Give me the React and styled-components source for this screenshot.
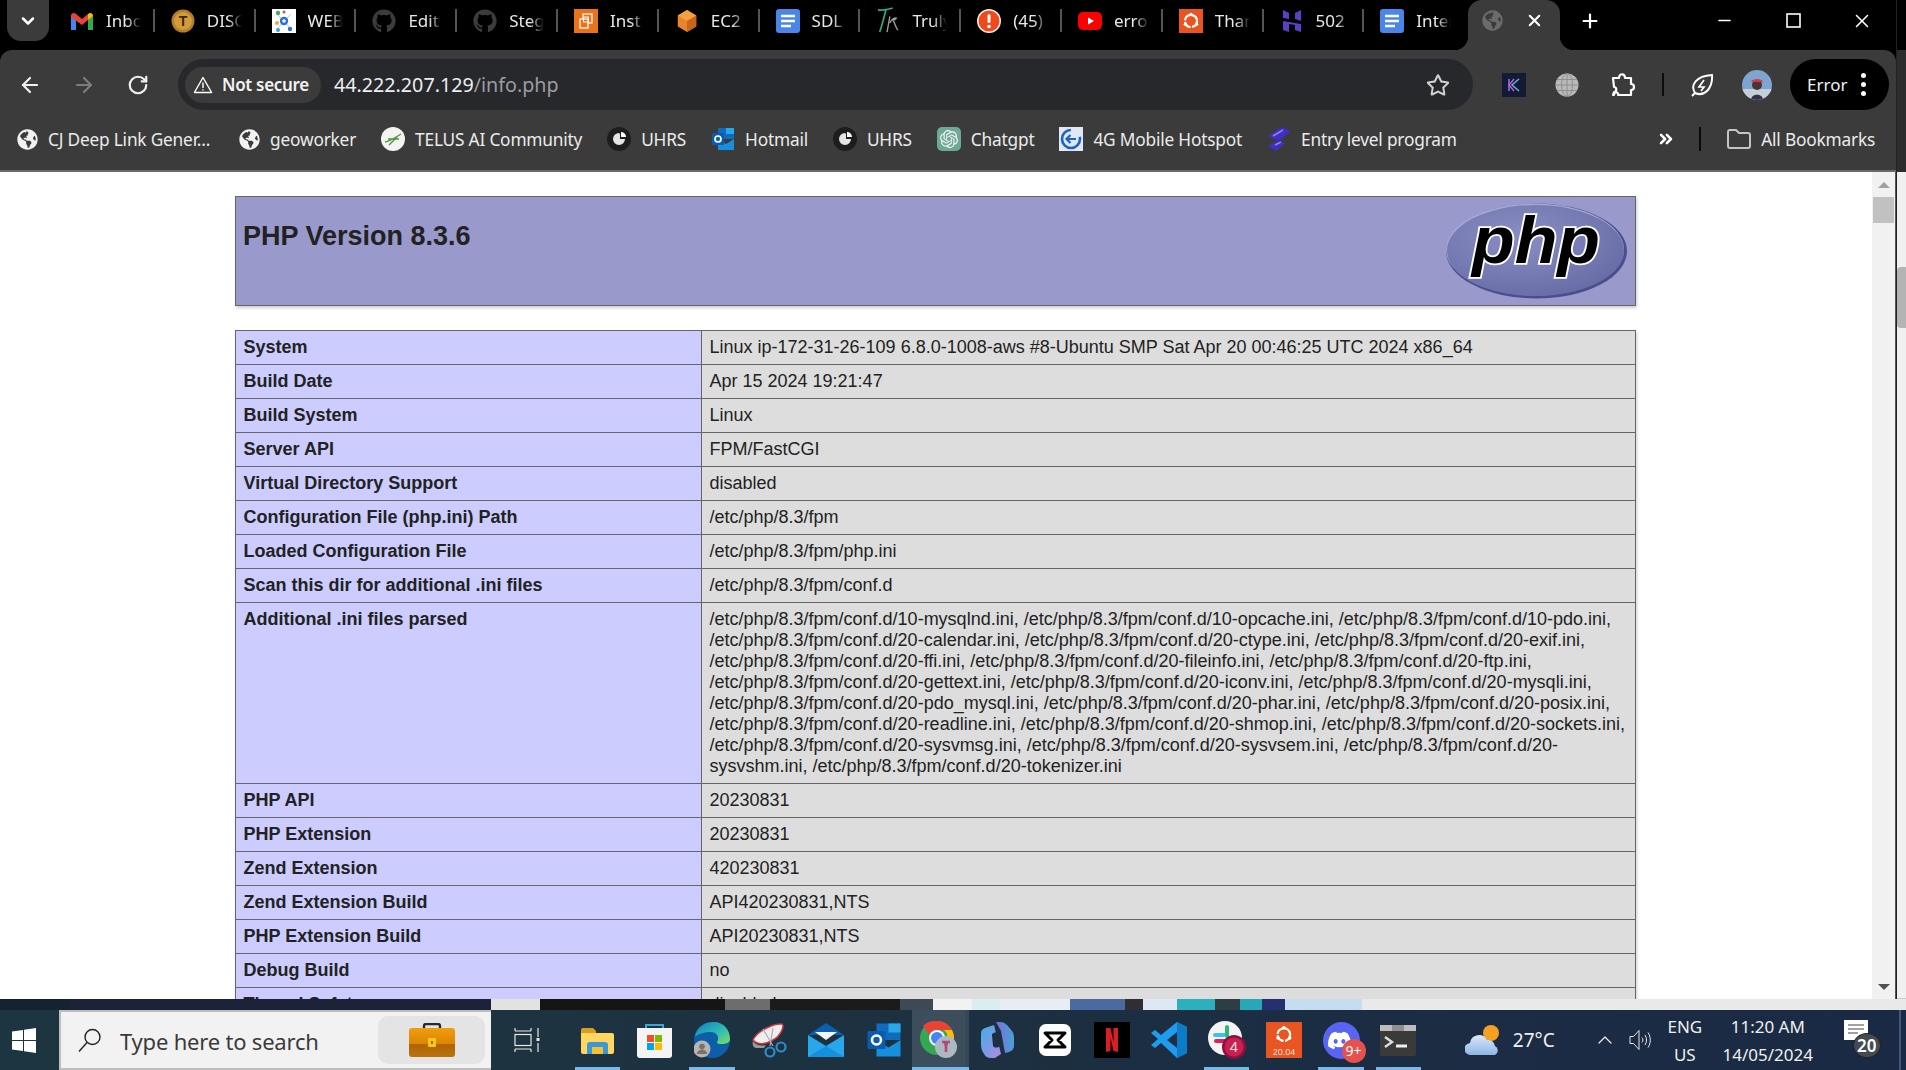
import React from "react";
import styled, { createGlobalStyle } from "styled-components";
import {
  FaGithub,
  FaGlobeAmericas,
  FaDiscord,
  FaRegStar,
} from "react-icons/fa";
import { SiOpenai } from "react-icons/si";
import { LuChevronDown, LuChevronsRight, LuX, LuPlus, LuMinus, LuArrowLeft, LuArrowRight, LuRotateCw, LuChevronUp } from "react-icons/lu";

const UI_FONT = `"Noto Sans", "Open Sans", sans-serif`;

const GlobalStyle = createGlobalStyle`
  html, body { margin: 0; padding: 0; background: #000; overflow: hidden; }
  * { box-sizing: border-box; }
`;

/* ---------- favicons ---------- */

const Gmail = () => (
  <svg width="24" height="24" viewBox="0 0 24 24">
    <path d="M1 6v15h5V11z" fill="#4285f4" />
    <path d="M18 11v10h5V6z" fill="#34a853" />
    <path d="M1 7c0-3 3-4 5-2l6 5 6-5v6l-6 5-11-8z" fill="#ea4335" />
    <path d="M18 5c2-2 5-1 5 2l-5 4z" fill="#fbbc04" />
  </svg>
);
const CircleT = () => (
  <svg width="24" height="24" viewBox="0 0 24 24">
    <circle cx="12" cy="12" r="11.5" fill="#b37f2c" />
    <circle cx="12" cy="12" r="9" fill="#d49a3c" />
    <text x="12" y="17" fontSize="14" fontWeight="700" textAnchor="middle" fontFamily="Liberation Sans" fill="#3a2a10">T</text>
  </svg>
);
const WebNodes = () => (
  <svg width="24" height="24" viewBox="0 0 24 24">
    <rect width="24" height="24" fill="#fff" />
    <path d="M5 5l7 7 7-7M5 20l7-8 7 8" stroke="#b9c6d8" fill="none" />
    <circle cx="12" cy="12" r="4.2" fill="#2a6fdc" />
    <circle cx="12" cy="12" r="1.8" fill="#fff" />
    <circle cx="6" cy="4" r="2.2" fill="#3fae5a" />
    <circle cx="12" cy="3" r="1.5" fill="#e34a4a" />
    <circle cx="5" cy="14" r="2" fill="#f0a531" />
    <circle cx="6" cy="21" r="2" fill="#2ea3d8" />
    <circle cx="18" cy="20" r="2.2" fill="#2a6fdc" />
  </svg>
);
const AwsCopy = () => (
  <svg width="24" height="24" viewBox="0 0 24 24">
    <rect width="24" height="24" fill="#e8731a" />
    <rect x="9" y="5" width="9" height="9" fill="none" stroke="#fff" strokeWidth="1.2" />
    <rect x="6" y="10" width="8" height="9" fill="#e8731a" stroke="#fff" strokeWidth="1.2" />
    <rect x="9.5" y="8" width="5" height="5" fill="none" stroke="#fff" />
  </svg>
);
const Cube = () => (
  <svg width="24" height="24" viewBox="0 0 24 26">
    <path d="M12 1l10 6v12l-10 6-10-6V7z" fill="#e8842a" />
    <path d="M12 1l10 6-10 6-10-6z" fill="#f4a040" />
    <path d="M12 13l10-6v12l-10 6z" fill="#c9651a" />
  </svg>
);
const Doc = () => (
  <svg width="24" height="24" viewBox="0 0 24 24">
    <rect width="24" height="24" rx="3" fill="#4a86e8" />
    <path d="M5 7h14M5 12h14M5 17h10" stroke="#fff" strokeWidth="2.4" />
  </svg>
);
const TrScript = () => (
  <svg width="24" height="28" viewBox="0 0 26 30">
    <path d="M2 3c6 1 12-1 16-2M11 2C9 10 7 18 4 27" stroke="#2fa98f" strokeWidth="1.8" fill="none" />
    <path d="M15 10c-1 6-2 11-3 17M15 17c2-4 5-6 7-5-1 2-3 2-4 2 3 3 3 9 6 11" stroke="#9a9a9a" strokeWidth="1.5" fill="none" />
  </svg>
);
const Alert = () => (
  <svg width="24" height="24" viewBox="0 0 24 24">
    <circle cx="12" cy="12" r="12" fill="#f5f0ea" />
    <circle cx="12" cy="12" r="10.5" fill="#ee4a1c" />
    <rect x="10.5" y="5" width="3" height="9" rx="1.5" fill="#fff" />
    <circle cx="12" cy="17.5" r="1.8" fill="#fff" />
  </svg>
);
const YouTube = () => (
  <svg width="24" height="18" viewBox="0 0 24 18">
    <rect width="24" height="18" rx="5" fill="#f00" />
    <path d="M10 5.5l6 3.5-6 3.5z" fill="#fff" />
  </svg>
);
const Ubuntu = ({ label }) => (
  <svg width={label ? 36 : 24} height={label ? 36 : 24} viewBox="0 0 24 24">
    <rect width="24" height="24" fill="#e95420" />
    <g transform={label ? "translate(3.5 0) scale(.7)" : ""}>
      <circle cx="12" cy="12" r="6" fill="none" stroke="#fff" strokeWidth="2.2" strokeDasharray="8 1.5" />
      <circle cx="12" cy="5.5" r="1.7" fill="#fff" />
      <circle cx="6.4" cy="15.2" r="1.7" fill="#fff" />
      <circle cx="17.6" cy="15.2" r="1.7" fill="#fff" />
    </g>
    {label && <text x="12" y="22.3" fontSize="6" fontFamily="Liberation Sans" textAnchor="middle" fill="#fff" opacity=".85">{label}</text>}
  </svg>
);
const Hostinger = () => (
  <svg width="24" height="24" viewBox="0 0 24 24">
    <path d="M3 1l6 3v6l-6-1zM21 1v11l-6-2V4zM3 12l18 3v8l-6-2v-5L9 15v8l-6-2z" fill="#5b3fc4" />
  </svg>
);
const TelusLeaf = () => (
  <svg width="24" height="24" viewBox="0 0 24 24">
    <circle cx="12" cy="12" r="12" fill="#f3f3f3" />
    <path d="M4 15c5-1 10-4 16-8M8 18l8-8M7 12h11" stroke="#4a9a3a" strokeWidth="1.4" fill="none" />
  </svg>
);
const Uhrs = () => (
  <svg width="24" height="24" viewBox="0 0 24 24">
    <circle cx="12" cy="12" r="12" fill="#1d1d1d" />
    <path d="M12 6a6 6 0 1 0 6 6h-5V7z" fill="#e4e4e4" />
    <path d="M14 5a5 5 0 0 1 5 5h-5z" fill="#fff" />
  </svg>
);
const Outlook = ({ size = 24 }) => (
  <svg width={size} height={size} viewBox="0 0 24 24">
    <rect x="7" y="1" width="16" height="11" fill="#0f6cbd" />
    <rect x="15" y="1" width="8" height="6" fill="#28a8ea" />
    <path d="M7 12l8 5 8-5v11H7z" fill="#1490df" />
    <rect x="1" y="6" width="12" height="12" rx="1" fill="#0a5cb0" />
    <circle cx="7" cy="12" r="3" fill="none" stroke="#fff" strokeWidth="1.7" />
  </svg>
);
const Chatgpt = () => (
  <ChatBadge><SiOpenai size={18} color="#f4f4f4" /></ChatBadge>
);
const FourG = () => (
  <svg width="24" height="24" viewBox="0 0 24 24">
    <rect width="24" height="24" fill="#dfe8f4" />
    <circle cx="12" cy="12" r="9" fill="none" stroke="#1c62c4" strokeWidth="2.6" strokeDasharray="42 12" />
    <path d="M9 12h8M11.500 8l-4 4 4 4" stroke="#1c62c4" strokeWidth="2.2" fill="none" />
  </svg>
);
const EntryLogo = () => (
  <svg width="24" height="24" viewBox="0 0 24 24">
    <path d="M15 0l8 4-8 8-3 2-11-5zM10 14l8 2-9 8-8-5z" fill="#3f2fc4" />
    <path d="M6 9l10-6M8 18l6-3" stroke="#8c82ea" strokeWidth="1.6" />
  </svg>
);
const KExt = () => (
  <svg width="24" height="24" viewBox="0 0 24 24">
    <rect width="24" height="24" fill="#141a33" />
    <path d="M7 6v12" stroke="#8d6ff0" strokeWidth="1.6" />
    <path d="M17 6l-7 6 7 6" stroke="#5fb0e8" strokeWidth="1.6" fill="none" />
    <path d="M12 6l-5 6 5 6" stroke="#d05fd8" strokeWidth="1.3" fill="none" />
  </svg>
);
const GridGlobe = () => (
  <svg width="24" height="24" viewBox="0 0 24 24">
    <circle cx="12" cy="12" r="11.5" fill="#b9b9b9" />
    <g stroke="#8a8a8a" fill="none" strokeWidth=".9">
      <ellipse cx="12" cy="12" rx="5.5" ry="11.5" />
      <path d="M12 .5v23M.5 12h23M2 6.5h20M2 17.5h20" />
    </g>
  </svg>
);
const PuzzleOut = () => (
  <svg width="25" height="25" viewBox="0 0 25 25" fill="none" stroke="#fff" strokeWidth="2.2" strokeLinejoin="round">
    <path d="M2 6h6c0-5 6-5 6 0h6v6c4 0 4 6 0 6v5H7c1-3-4-4-4 0H2l1-3c3 0 3-5 0-5z" />
  </svg>
);
const LeafBolt = () => (
  <svg width="24" height="24" viewBox="0 0 24 24" fill="none" stroke="#fff" strokeWidth="2">
    <path d="M2 23l3-3M5 20C0 12 6 3 22 2c1 14-8 22-17 18z" />
    <path d="M14 7l-5 7h5l-3 4" strokeWidth="1.7" />
  </svg>
);
const Avatar = ({ size = 30 }) => (
  <svg width={size} height={size} viewBox="0 0 30 30">
    <defs>
      <clipPath id={`av${size}`}><circle cx="15" cy="15" r="15" /></clipPath>
    </defs>
    <g clipPath={`url(#av${size})`}>
      <rect width="30" height="30" fill="#7ea4cf" />
      <rect y="19" width="30" height="11" fill="#c5cfd8" />
      <circle cx="15" cy="15" r="5" fill="#4a3232" />
      <path d="M9 12c1-4 11-4 12 0z" fill="#d03a4a" />
      <path d="M9 30c0-7 12-7 12 0z" fill="#334" />
    </g>
  </svg>
);
const OutlineFolder = () => (
  <svg width="24" height="20" viewBox="0 0 24 20" fill="none" stroke="#c4c4c4" strokeWidth="2">
    <path d="M1 3a2 2 0 0 1 2-2h6l3 3h9a2 2 0 0 1 2 2v11a2 2 0 0 1-2 2H3a2 2 0 0 1-2-2z" />
  </svg>
);
const WarnTriangle = () => (
  <svg width="20" height="18" viewBox="0 0 20 18" fill="none" stroke="#fff" strokeWidth="1.4">
    <path d="M10 1.5l8.6 15H1.4z" strokeLinejoin="round" />
    <path d="M10 6.5v5.5M10 13.2v1.4" />
  </svg>
);
const MaxSquare = () => (
  <svg width="15" height="15" viewBox="0 0 15 15"><rect x="1" y="1" width="13" height="13" fill="none" stroke="#fff" strokeWidth="1.6" /></svg>
);

/* ---------- taskbar icons ---------- */

const WinLogo = () => (
  <svg width="24" height="25" viewBox="0 0 24 25" fill="#fff">
    <path d="M0 3.5l11-1.5v10H0zM12 1.8L24 0v12H12zM0 13h11v10L0 21.5zM12 13h12v12l-12-1.8z" />
  </svg>
);
const SearchGlass = () => (
  <svg width="24" height="24" viewBox="0 0 24 24" fill="none" stroke="#222" strokeWidth="1.4">
    <circle cx="14.5" cy="9" r="7.5" />
    <path d="M9 14.5L1 23.5" />
  </svg>
);
const Briefcase = () => (
  <svg width="46" height="34" viewBox="0 0 46 34">
    <defs>
      <linearGradient id="bc" x1="0" y1="0" x2="0" y2="1">
        <stop offset="0" stopColor="#f09c10" /><stop offset=".55" stopColor="#dd8500" />
        <stop offset=".56" stopColor="#b06300" /><stop offset="1" stopColor="#b87410" />
      </linearGradient>
    </defs>
    <path d="M15 6V3a2 2 0 0 1 2-2h12a2 2 0 0 1 2 2v3" stroke="#2a2a2a" strokeWidth="2.4" fill="none" />
    <rect y="5" width="46" height="29" rx="3" fill="url(#bc)" />
    <rect x="19" y="15" width="8" height="9" rx="1" fill="#f7c61d" />
    <rect x="22" y="18" width="2" height="3" fill="#a86a00" />
  </svg>
);
const TaskViewIcon = () => (
  <svg width="32" height="24" viewBox="0 0 32 24" fill="none" stroke="#e8e8e8" strokeWidth="1.2">
    <path d="M1 3h16M1 0v3M17 0v3M1 21h16M1 21v3M17 21v3" />
    <rect x="1" y="6.5" width="16" height="11" />
    <path d="M24 0v9M24 15v9" />
    <rect x="22.5" y="10" width="3" height="3" fill="#e8e8e8" stroke="none" />
  </svg>
);
const ExplorerIcon = () => (
  <svg width="33" height="27" viewBox="0 0 33 27">
    <path d="M0 3a2 2 0 0 1 2-2h10l3 3v6H0z" fill="#d89e20" />
    <path d="M0 6h31a2 2 0 0 1 2 2v17a2 2 0 0 1-2 2H2a2 2 0 0 1-2-2z" fill="#ffd75e" />
    <path d="M6 27v-9a3 3 0 0 1 3-3h15a3 3 0 0 1 3 3v9h-5v-7H11v7z" fill="#3a98d8" />
    <rect x="11" y="20" width="11" height="7" fill="#f2c232" />
  </svg>
);
const StoreIcon = () => (
  <svg width="35" height="35" viewBox="0 0 35 35">
    <path d="M9 6V2h17v4" fill="none" stroke="#3aa6dc" strokeWidth="2" />
    <path d="M0 5h35v27a3 3 0 0 1-3 3H3a3 3 0 0 1-3-3z" fill="#f4f4f4" />
    <rect x="10" y="12" width="7" height="7" fill="#f25022" />
    <rect x="18" y="12" width="7" height="7" fill="#7fba00" />
    <rect x="10" y="20" width="7" height="7" fill="#00a4ef" />
    <rect x="18" y="20" width="7" height="7" fill="#ffb900" />
  </svg>
);
const EdgeIcon = () => (
  <svg width="36" height="36" viewBox="0 0 36 36">
    <defs>
      <linearGradient id="edg" x1="0" y1="0" x2="1" y2="1">
        <stop offset="0" stopColor="#0c7fc4" /><stop offset=".6" stopColor="#33c0b0" /><stop offset="1" stopColor="#7fdc5a" />
      </linearGradient>
    </defs>
    <circle cx="18" cy="18" r="18" fill="#0c5ea8" />
    <path d="M1 15C3 3 14 0 20 0c10 0 16 8 16 17 0 4-4 5-9 5-4 0-5-1-3-4 1-4-2-8-7-8-6 0-14 2-16 5z" fill="url(#edg)" />
    <circle cx="8" cy="27" r="8.5" fill="#b5b5b5" />
    <circle cx="8" cy="24.5" r="2.8" fill="#7c7068" />
    <path d="M2.8 32c.6-6 9.800-6 10.400 0z" fill="#7c7068" />
  </svg>
);
const SnipIcon = () => (
  <svg width="35" height="35" viewBox="0 0 35 35" fill="none">
    <path d="M1 17C5 8 22 0 30 1c3 1-1 12-9 16-8 5-16 5-20 0z" fill="#eee" stroke="#c8363c" strokeWidth="1.5" />
    <path d="M1 18c3 5 10 5 13 4l-2 3H4c-3 0-4-4-3-7z" fill="#9a9a9a" />
    <path d="M11 6l10 17M21 5l-3 18" stroke="#aab" strokeWidth="1.2" />
    <circle cx="18" cy="29" r="4.5" stroke="#2f8ac6" strokeWidth="2.2" />
    <circle cx="29" cy="24" r="4.5" stroke="#2f8ac6" strokeWidth="2.2" />
  </svg>
);
const MailIcon = () => (
  <svg width="36" height="34" viewBox="0 0 36 34">
    <path d="M18 0l18 12H0z" fill="#0b5fb0" />
    <path d="M7 9h22l-11 8z" fill="#f4f4f4" />
    <path d="M0 12l18 11 18-11v22H0z" fill="#28a8ea" />
    <path d="M0 34l18-11 18 11z" fill="#1490df" />
  </svg>
);
const ChromeIcon = () => (
  <svg width="38" height="38" viewBox="0 0 38 38">
    <circle cx="17" cy="17" r="17" fill="#34a853" />
    <path d="M17 0a17 17 0 0 1 15 9H17a8 8 0 0 0-7.500 5L3 5a17 17 0 0 1 14-5z" fill="#ea4335" />
    <path d="M32 9a17 17 0 0 1-13 25l6-13a8 8 0 0 0-1-12z" fill="#fbbc04" />
    <circle cx="17" cy="17" r="8" fill="#fff" />
    <circle cx="17" cy="17" r="6" fill="#4285f4" />
    <circle cx="26" cy="26" r="11" fill="#aeb7c4" />
    <path d="M22 21h8M26 21v10" stroke="#b04a78" strokeWidth="2.6" />
    <circle cx="26" cy="23" r="2" fill="#b04a78" />
  </svg>
);
const CopilotIcon = () => (
  <svg width="33" height="36" viewBox="0 0 33 36">
    <defs>
      <linearGradient id="cop1" x1="0" y1="0" x2="1" y2="0"><stop offset="0" stopColor="#7a6fd8" /><stop offset="1" stopColor="#4aa0d8" /></linearGradient>
      <linearGradient id="cop2" x1="0" y1="0" x2="1" y2="1"><stop offset="0" stopColor="#3fb0e8" /><stop offset="1" stopColor="#b08ae0" /></linearGradient>
    </defs>
    <path d="M15 0h4c3 0 5 1 7 3l5 6c2 3 2 5 2 9v6c0 3-2 5-5 6l-4 1-4-22z" fill="url(#cop1)" />
    <path d="M0 12c0-3 1-5 4-6l9-3 7 29-6 4H10c-3 0-5-1-7-4-2-3-3-6-3-10z" fill="url(#cop2)" />
    <path d="M11 13c0-2 3-3 5-2l3 13c-2 2-6 2-7 0z" fill="#1d2f42" />
  </svg>
);
const CapCutIcon = () => (
  <svg width="32" height="32" viewBox="0 0 32 32">
    <rect width="32" height="32" rx="7" fill="#fff" />
    <path d="M6 9h20l-7 7 7 7H6l7-7z" fill="none" stroke="#000" strokeWidth="3" strokeLinejoin="round" />
  </svg>
);
const NetflixIcon = () => (
  <svg width="36" height="36" viewBox="0 0 36 36">
    <rect width="36" height="36" fill="#000" />
    <path d="M12 6h4.500l3 14V6H24v24l-4.500-1-3-13v13L12 30z" fill="#d81f26" />
  </svg>
);
const VsCodeIcon = () => (
  <svg width="36" height="36" viewBox="0 0 36 36">
    <path d="M26 0l10 5v26l-10 5-16-15-6 5-4-3 7-6-7-6 4-3 6 5z" fill="#1f9cf0" />
    <path d="M26 0l10 5v26l-10 5z" fill="#0a7cc8" />
    <path d="M26 10l-10 8 10 8z" fill="#1d2f42" />
  </svg>
);
const SlackIcon = () => (
  <svg width="38" height="38" viewBox="0 0 38 38">
    <circle cx="17" cy="17" r="17" fill="#f4f4f4" />
    <path d="M7 14h9" stroke="#36c5f0" strokeWidth="4" strokeLinecap="round" />
    <path d="M19 6v9" stroke="#2eb67d" strokeWidth="4" strokeLinecap="round" />
    <path d="M8 20h9" stroke="#e01e5a" strokeWidth="4" strokeLinecap="round" />
    <path d="M21 20h6" stroke="#ecb22e" strokeWidth="4" strokeLinecap="round" />
    <circle cx="26" cy="26" r="12" fill="#8c1045" />
    <circle cx="26" cy="26" r="9.500" fill="#c8214f" />
    <text x="26" y="31" fontSize="15" fontFamily="Liberation Sans" textAnchor="middle" fill="#f6d9df">4</text>
  </svg>
);
const DiscordIcon = () => (
  <DiscordWrap>
    <FaDiscord size={25} color="#fff" />
    <DiscordBadge>9+</DiscordBadge>
  </DiscordWrap>
);
const TerminalIcon = () => (
  <svg width="36" height="31" viewBox="0 0 36 31">
    <rect width="36" height="31" rx="2" fill="#3a3a3a" />
    <rect width="36" height="6" fill="#bdbdbd" />
    <rect x="12" width="12" height="6" fill="#8f8f8f" />
    <path d="M5 12l7 5-7 5" stroke="#ddd" strokeWidth="2.4" fill="none" />
    <path d="M16 21h11" stroke="#eee" strokeWidth="3" />
  </svg>
);
const CloudSun = () => (
  <svg width="36" height="30" viewBox="0 0 36 30">
    <defs>
      <linearGradient id="cl" x1="0" y1="0" x2="0" y2="1"><stop offset="0" stopColor="#dbe8f8" /><stop offset="1" stopColor="#8db6e6" /></linearGradient>
    </defs>
    <circle cx="26" cy="8" r="8" fill="#f5a020" />
    <path d="M6 30a6 6 0 0 1-1-12 9 9 0 0 1 17-3 7 7 0 0 1 8 6 5 5 0 0 1 0 9z" fill="url(#cl)" />
  </svg>
);
const Speaker = () => (
  <svg width="23" height="22" viewBox="0 0 23 22" fill="none" stroke="#e6e6e6" strokeWidth="1">
    <path d="M1 7.500h3.500L10 1.500v19L4.500 14.500H1z" />
    <path d="M13 8.500c1.200 1.500 1.200 3.500 0 5M16 6c2 3 2 7 0 10M19 3.500c3 4 3 11 0 15" />
  </svg>
);
const Notif = () => (
  <NotifWrap>
    <svg width="24" height="20" viewBox="0 0 24 20">
      <rect width="24" height="20" fill="#fff" />
      <path d="M4 5h16M4 9h16M4 13h10" stroke="#444" strokeWidth="1.2" />
    </svg>
    <NotifBadge>20</NotifBadge>
  </NotifWrap>
);

/* ---------- data ---------- */

const tabs = [
  { icon: <Gmail />, title: "Inbox" },
  { icon: <CircleT />, title: "DISC" },
  { icon: <WebNodes />, title: "WEB" },
  { icon: <FaGithub size={24} color="#3c3c3c" />, title: "Edit" },
  { icon: <FaGithub size={24} color="#3c3c3c" />, title: "Steg" },
  { icon: <AwsCopy />, title: "Inst" },
  { icon: <Cube />, title: "EC2" },
  { icon: <Doc />, title: "SDL" },
  { icon: <TrScript />, title: "Truly" },
  { icon: <Alert />, title: "(45)" },
  { icon: <YouTube />, title: "error" },
  { icon: <Ubuntu />, title: "Thank" },
  { icon: <Hostinger />, title: "502" },
  { icon: <Doc />, title: "Inter" },
];

const bookmarks = [
  { icon: <FaGlobeAmericas size={21} color="#f2f2f2" />, title: "CJ Deep Link Gener..." },
  { icon: <FaGlobeAmericas size={21} color="#f2f2f2" />, title: "geoworker" },
  { icon: <TelusLeaf />, title: "TELUS AI Community" },
  { icon: <Uhrs />, title: "UHRS" },
  { icon: <Outlook />, title: "Hotmail" },
  { icon: <Uhrs />, title: "UHRS" },
  { icon: <Chatgpt />, title: "Chatgpt" },
  { icon: <FourG />, title: "4G Mobile Hotspot" },
  { icon: <EntryLogo />, title: "Entry level program" },
];

const rows = [
  ["System", "Linux ip-172-31-26-109 6.8.0-1008-aws #8-Ubuntu SMP Sat Apr 20 00:46:25 UTC 2024 x86_64"],
  ["Build Date", "Apr 15 2024 19:21:47"],
  ["Build System", "Linux"],
  ["Server API", "FPM/FastCGI"],
  ["Virtual Directory Support", "disabled"],
  ["Configuration File (php.ini) Path", "/etc/php/8.3/fpm"],
  ["Loaded Configuration File", "/etc/php/8.3/fpm/php.ini"],
  ["Scan this dir for additional .ini files", "/etc/php/8.3/fpm/conf.d"],
  ["Additional .ini files parsed", "/etc/php/8.3/fpm/conf.d/10-mysqlnd.ini, /etc/php/8.3/fpm/conf.d/10-opcache.ini, /etc/php/8.3/fpm/conf.d/10-pdo.ini, /etc/php/8.3/fpm/conf.d/20-calendar.ini, /etc/php/8.3/fpm/conf.d/20-ctype.ini, /etc/php/8.3/fpm/conf.d/20-exif.ini, /etc/php/8.3/fpm/conf.d/20-ffi.ini, /etc/php/8.3/fpm/conf.d/20-fileinfo.ini, /etc/php/8.3/fpm/conf.d/20-ftp.ini, /etc/php/8.3/fpm/conf.d/20-gettext.ini, /etc/php/8.3/fpm/conf.d/20-iconv.ini, /etc/php/8.3/fpm/conf.d/20-mysqli.ini, /etc/php/8.3/fpm/conf.d/20-pdo_mysql.ini, /etc/php/8.3/fpm/conf.d/20-phar.ini, /etc/php/8.3/fpm/conf.d/20-posix.ini, /etc/php/8.3/fpm/conf.d/20-readline.ini, /etc/php/8.3/fpm/conf.d/20-shmop.ini, /etc/php/8.3/fpm/conf.d/20-sockets.ini, /etc/php/8.3/fpm/conf.d/20-sysvmsg.ini, /etc/php/8.3/fpm/conf.d/20-sysvsem.ini, /etc/php/8.3/fpm/conf.d/20-sysvshm.ini, /etc/php/8.3/fpm/conf.d/20-tokenizer.ini"],
  ["PHP API", "20230831"],
  ["PHP Extension", "20230831"],
  ["Zend Extension", "420230831"],
  ["Zend Extension Build", "API420230831,NTS"],
  ["PHP Extension Build", "API20230831,NTS"],
  ["Debug Build", "no"],
  ["Thread Safety", "disabled"],
];

const taskIcons = [
  { icon: <ExplorerIcon />, running: true },
  { icon: <StoreIcon /> },
  { icon: <EdgeIcon />, running: true },
  { icon: <SnipIcon /> },
  { icon: <MailIcon /> },
  { icon: <Outlook size={36} /> },
  { icon: <ChromeIcon />, running: true, active: true },
  { icon: <CopilotIcon /> },
  { icon: <CapCutIcon /> },
  { icon: <NetflixIcon /> },
  { icon: <VsCodeIcon /> },
  { icon: <SlackIcon />, running: true },
  { icon: <Ubuntu label="20.04" /> },
  { icon: <DiscordIcon />, running: true },
  { icon: <TerminalIcon />, running: true },
];

export default function App() {
  return (
    <Screen>
      <GlobalStyle />
      <WindowRow>
        <ChromeWindow>
          <TabStrip>
            <TabSearch><LuChevronDown size={20} strokeWidth={3} color="#fff" /></TabSearch>
            {tabs.map((t, i) => (
              <Tab key={i}>
                <FavSlot>{t.icon}</FavSlot>
                <TabTitle>{t.title}</TabTitle>
                {i < tabs.length - 1 && <TabSep />}
              </Tab>
            ))}
            <ActiveTab>
              <FaGlobeAmericas size={21} color="#6b6b6b" />
              <LuX size={19} strokeWidth={2.6} color="#fff" />
            </ActiveTab>
            <NewTab><LuPlus size={22} strokeWidth={2.4} color="#fff" /></NewTab>
            <WinControls>
              <WinBtn><LuMinus size={19} color="#fff" /></WinBtn>
              <WinBtn><MaxSquare /></WinBtn>
              <WinBtn><LuX size={22} strokeWidth={1.7} color="#fff" /></WinBtn>
            </WinControls>
          </TabStrip>

          <Toolbar>
            <NavBtn><LuArrowLeft size={24} strokeWidth={2.2} color="#f0f0f0" /></NavBtn>
            <NavBtn><LuArrowRight size={24} strokeWidth={2.2} color="#7d7d7d" /></NavBtn>
            <NavBtn><LuRotateCw size={22} strokeWidth={2.4} color="#f0f0f0" /></NavBtn>
            <Omnibox>
              <SecureChip><WarnTriangle />Not secure</SecureChip>
              <UrlText>44.222.207.129<UrlPath>/info.php</UrlPath></UrlText>
              <StarSlot><FaRegStar size={24} color="#d0d0d0" /></StarSlot>
            </Omnibox>
            <ToolIcon $ml={29}><KExt /></ToolIcon>
            <ToolIcon $ml={29}><GridGlobe /></ToolIcon>
            <ToolIcon $ml={32}><PuzzleOut /></ToolIcon>
            <ToolSep />
            <ToolIcon $ml={26}><LeafBolt /></ToolIcon>
            <ToolIcon $ml={28}><Avatar /></ToolIcon>
            <ErrorPill>Error<Dots><i /><i /><i /></Dots></ErrorPill>
          </Toolbar>

          <BookmarkBar>
            {bookmarks.map((b, i) => (
              <Bookmark key={i}>
                <BookmarkIcon>{b.icon}</BookmarkIcon>
                {b.title}
              </Bookmark>
            ))}
            <BookmarkEnd>
              <LuChevronsRight size={20} strokeWidth={3} color="#fff" />
              <BarSep />
              <Bookmark><OutlineFolder />All Bookmarks</Bookmark>
            </BookmarkEnd>
          </BookmarkBar>

          <Viewport>
            <Page>
              <PhpHeader>
                <PhpTitle>PHP Version 8.3.6</PhpTitle>
                <PhpLogo />
              </PhpHeader>
              <InfoTable>
                <tbody>
                  {rows.map(([k, v]) => (
                    <tr key={k}>
                      <KeyCell>{k}</KeyCell>
                      <ValueCell>{v}</ValueCell>
                    </tr>
                  ))}
                </tbody>
              </InfoTable>
            </Page>
            <PageScroll>
              <ScrollArrow><Tri /></ScrollArrow>
              <ScrollThumb />
              <ScrollArrow $down><Tri $down /></ScrollArrow>
            </PageScroll>
          </Viewport>
        </ChromeWindow>
        <BehindEdge>
          <BehindDark />
          <BehindPage><BehindThumb /></BehindPage>
        </BehindEdge>
      </WindowRow>
      <Wallpaper />
      <Taskbar>
        <StartCell><WinLogo /></StartCell>
        <SearchBox>
          <SearchGlass />
          <SearchText>Type here to search</SearchText>
          <SearchPromo><Briefcase /></SearchPromo>
        </SearchBox>
        <TaskViewCell><TaskViewIcon /></TaskViewCell>
        {taskIcons.map((t, i) => (
          <TaskCell key={i} $running={t.running} $active={t.active}>{t.icon}</TaskCell>
        ))}
        <Tray>
          <CloudSun />
          <Temp>27°C</Temp>
          <TraySlot $ml={33}><LuChevronUp size={24} strokeWidth={1.2} color="#eee" /></TraySlot>
          <TraySlot $ml={12}><Speaker /></TraySlot>
          <LangBlock><span>ENG</span><span>US</span></LangBlock>
          <ClockBlock><span>11:20 AM</span><span>14/05/2024</span></ClockBlock>
          <Notif />
          <ShowDesktop />
        </Tray>
      </Taskbar>
    </Screen>
  );
}

function PhpLogo() {
  return (
    <LogoSvg width="181" height="96" viewBox="0 0 181 96">
      <defs>
        <radialGradient id="phpg" cx=".4" cy=".35" r=".75">
          <stop offset="0" stopColor="#8a8ec4" />
          <stop offset=".6" stopColor="#7479b1" />
          <stop offset="1" stopColor="#6469a4" />
        </radialGradient>
      </defs>
      <ellipse cx="90.500" cy="48" rx="90.500" ry="47.500" fill="#4a4f8c" />
      <ellipse cx="89" cy="46.500" rx="89" ry="46" fill="#a6a9d4" />
      <ellipse cx="89.500" cy="47.500" rx="88.500" ry="45.500" fill="url(#phpg)" />
      <text
        x="26"
        y="60"
        fontFamily="Liberation Sans"
        fontWeight="700"
        fontStyle="italic"
        fontSize="66"
        textLength="128"
        lengthAdjust="spacingAndGlyphs"
        fill="#000"
        stroke="#fff"
        strokeWidth="3.500"
        paintOrder="stroke"
      >php</text>
    </LogoSvg>
  );
}

/* ---------- layout ---------- */

const Screen = styled.div`
  width: 1906px;
  height: 1070px;
  display: flex;
  flex-direction: column;
  overflow: hidden;
  font-family: ${UI_FONT};
`;

const WindowRow = styled.div`
  height: 999px;
  display: flex;
`;

const ChromeWindow = styled.div`
  width: 1896px;
  display: flex;
  flex-direction: column;
  background: #000;
`;

const BehindEdge = styled.div`
  flex: 1;
  display: flex;
  flex-direction: column;
  background: #000;
  border-left: 1px solid #222;
`;

const BehindDark = styled.div`
  height: 122px;
  margin-top: 50px;
  background: #2c2c2c;
  flex: none;
`;

const BehindPage = styled.div`
  flex: 1;
  background: #f0f0f0;
  padding-top: 95px;
  border-bottom: 1px solid #ccc;
`;

const BehindThumb = styled.div`
  height: 61px;
  background: #b4b4b4;
  border-radius: 4px 0 0 4px;
`;

/* tab strip */

const TabStrip = styled.div`
  height: 50px;
  display: flex;
  align-items: flex-start;
  background: #000;
  padding-left: 7px;
  flex: none;
`;

const TabSearch = styled.div`
  width: 42px;
  height: 41px;
  margin-right: 9px;
  display: flex;
  align-items: center;
  justify-content: center;
  background: #3b3b3b;
  border-radius: 0 0 14px 14px;
`;

const Tab = styled.div`
  width: 100.8px;
  height: 41px;
  flex: none;
  display: flex;
  align-items: center;
  padding-left: 12px;
`;

const FavSlot = styled.div`
  width: 24px;
  height: 32px;
  flex: none;
  display: flex;
  align-items: center;
  justify-content: center;
`;

const TabTitle = styled.div`
  width: 35px;
  margin-left: 12px;
  flex: none;
  overflow: hidden;
  white-space: nowrap;
  color: #e8e8e8;
  font-size: 17px;
  -webkit-mask-image: linear-gradient(90deg, #000 60%, transparent);
  mask-image: linear-gradient(90deg, #000 60%, transparent);
`;

const TabSep = styled.div`
  width: 2px;
  height: 23px;
  margin-left: auto;
  margin-right: 4px;
  background: #555;
  flex: none;
`;

const ActiveTab = styled.div`
  position: relative;
  width: 92px;
  height: 50px;
  margin-left: -1px;
  flex: none;
  display: flex;
  align-items: center;
  justify-content: space-between;
  padding: 0 16px 9px 14px;
  background: #3b3b3b;
  border-radius: 14px 14px 0 0;

  &::before,
  &::after {
    content: "";
    position: absolute;
    bottom: 0;
    width: 14px;
    height: 14px;
  }
  &::before {
    left: -14px;
    background: radial-gradient(circle at 0 0, #000 14px, #3b3b3b 14.500px);
  }
  &::after {
    right: -14px;
    background: radial-gradient(circle at 100% 0, #000 14px, #3b3b3b 14.500px);
  }
`;

const NewTab = styled.div`
  width: 22px;
  height: 41px;
  margin-left: 19px;
  display: flex;
  align-items: center;
  justify-content: center;
  flex: none;
`;

const WinControls = styled.div`
  margin-left: auto;
  display: flex;
`;

const WinBtn = styled.div`
  width: 68.500px;
  height: 41px;
  display: flex;
  align-items: center;
  justify-content: center;
`;

/* toolbar */

const Toolbar = styled.div`
  height: 60px;
  flex: none;
  display: flex;
  align-items: flex-start;
  padding: 9px 8px 0 3px;
  background: #3b3b3b;
  border-radius: 12px 12px 0 0;
`;

const NavBtn = styled.div`
  width: 54px;
  height: 51px;
  flex: none;
  display: flex;
  align-items: center;
  justify-content: center;
`;

const Omnibox = styled.div`
  width: 1295px;
  height: 51px;
  margin-left: 13px;
  flex: none;
  display: flex;
  align-items: center;
  padding: 0 23px 0 7px;
  background: #26282b;
  border-radius: 26px;
`;

const SecureChip = styled.div`
  height: 36px;
  width: 136px;
  flex: none;
  display: flex;
  align-items: center;
  gap: 9px;
  padding-left: 8px;
  background: #3b3b3b;
  border-radius: 18px;
  color: #f2f2f2;
  font-size: 17px;
  font-weight: 600;
  letter-spacing: -0.3px;
  white-space: nowrap;
`;

const UrlText = styled.div`
  margin-left: 13px;
  color: #eceef0;
  font-size: 19.700px;
`;

const UrlPath = styled.span`
  color: #9a9da1;
`;

const StarSlot = styled.div`
  margin-left: auto;
  display: flex;
`;

const ToolIcon = styled.div`
  margin-left: ${(p) => p.$ml}px;
  height: 51px;
  flex: none;
  display: flex;
  align-items: center;
`;

const ToolSep = styled.div`
  width: 2px;
  height: 23px;
  margin: 14px 0 0 26px;
  background: #0c0c0c;
  flex: none;
`;

const ErrorPill = styled.div`
  width: 99px;
  height: 51px;
  margin-left: 18px;
  flex: none;
  display: flex;
  align-items: center;
  padding-left: 17px;
  gap: 14px;
  background: #000;
  border-radius: 26px;
  color: #f0f0f0;
  font-size: 17px;
`;

const Dots = styled.div`
  display: flex;
  flex-direction: column;
  gap: 4px;

  i {
    display: block;
    width: 5px;
    height: 5px;
    border-radius: 50%;
    background: #fff;
  }
`;

/* bookmarks */

const BookmarkBar = styled.div`
  height: 62px;
  flex: none;
  display: flex;
  align-items: center;
  gap: 25px;
  padding: 0 21px 2px 17px;
  background: #3b3b3b;
  border-bottom: 2px solid #6a6a6a;
`;

const Bookmark = styled.div`
  display: flex;
  align-items: center;
  gap: 10px;
  color: #ebebeb;
  font-size: 17.300px;
  letter-spacing: -0.2px;
  white-space: nowrap;

  &:first-child {
    margin-right: 4px;
  }
`;

const BookmarkIcon = styled.span`
  display: inline-flex;
  flex: none;
`;

const BookmarkEnd = styled.div`
  margin-left: auto;
  display: flex;
  align-items: center;

  ${Bookmark} {
    margin-right: 0;
  }
`;

const BarSep = styled.div`
  width: 2px;
  height: 24px;
  margin: 0 26px 0 23px;
  background: #0a0a0a;
`;

const ChatBadge = styled.div`
  width: 24px;
  height: 24px;
  display: flex;
  align-items: center;
  justify-content: center;
  border-radius: 5px;
  background: #6fa897;
`;

/* php page */

const Viewport = styled.div`
  flex: 1;
  min-height: 0;
  display: flex;
  background: #fff;
`;

const Page = styled.div`
  width: 1872px;
  flex: none;
  overflow: hidden;
  padding: 24px 0 0 235px;
  color: #222;
  font-family: "Liberation Sans", Arial, sans-serif;
`;

const PhpHeader = styled.div`
  width: 1401px;
  height: 110px;
  display: flex;
  justify-content: space-between;
  align-items: flex-start;
  padding: 6px 8px 0 7px;
  background: #99c;
  border: 1px solid #666;
  box-shadow: 1px 2px 3px rgba(0, 0, 0, 0.2);
  margin-bottom: 24px;
`;

const PhpTitle = styled.h1`
  margin: 18px 0 0;
  font-size: 27px;
  line-height: 31px;
  font-weight: 700;
`;

const LogoSvg = styled.svg`
  flex: none;
`;

const InfoTable = styled.table`
  width: 1401px;
  table-layout: fixed;
  border-collapse: collapse;
  box-shadow: 1px 2px 3px rgba(0, 0, 0, 0.2);
  font-size: 18px;
  line-height: 21px;
`;

const KeyCell = styled.td`
  width: 466px;
  padding: 6px 7.500px;
  background: #ccf;
  border: 1px solid #666;
  font-weight: 700;
  vertical-align: baseline;
`;

const ValueCell = styled.td`
  padding: 6px 7.500px;
  background: #ddd;
  border: 1px solid #666;
  vertical-align: baseline;
  overflow-wrap: break-word;
`;

const PageScroll = styled.div`
  width: 24px;
  display: flex;
  flex-direction: column;
  align-items: center;
  justify-content: flex-start;
  background: #f1f1f1;
  border-right: 1px solid #555;
`;

const ScrollArrow = styled.div`
  width: 100%;
  height: 25px;
  flex: none;
  display: flex;
  align-items: center;
  justify-content: center;
  ${(p) => p.$down && "margin-top: auto; height: 24px;"}
`;

const Tri = styled.div`
  width: 0;
  height: 0;
  border-left: 6px solid transparent;
  border-right: 6px solid transparent;
  ${(p) => (p.$down ? "border-top: 6px solid #505050;" : "border-bottom: 6px solid #a0a0a0;")}
`;

const ScrollThumb = styled.div`
  width: 21px;
  height: 26px;
  background: #c1c1c1;
  flex: none;
`;

/* bottom */

const Wallpaper = styled.div`
  height: 11px;
  flex: none;
  background: linear-gradient(
    90deg,
    #152230 0 70px,
    #1c2238 70px 491px,
    #e2e2e2 491px 540px,
    #151515 540px 725px,
    #6d6d6d 725px 770px,
    #1b1b1b 770px 900px,
    #3d4a55 900px 933px,
    #f2f2f2 933px 972px,
    #d8eef0 972px 1000px,
    #e8edf5 1000px 1070px,
    #4b6ba0 1070px 1125px,
    #2f2f33 1125px 1143px,
    #dde8f4 1143px 1177px,
    #2bb0bd 1177px 1215px,
    #2d3d44 1215px 1240px,
    #28a7b8 1240px 1262px,
    #26306e 1262px 1285px,
    #c6ddf1 1285px 1362px,
    #e9e9e9 1362px
  );
`;

const Taskbar = styled.div`
  height: 60px;
  flex: none;
  display: flex;
  background: linear-gradient(90deg, #1c3541 0, #1d3240 40%, #1b2c43 75%, #1a2a44 100%);
`;

const StartCell = styled.div`
  width: 59px;
  flex: none;
  display: flex;
  align-items: center;
  justify-content: center;
  padding-right: 12px;
`;

const SearchBox = styled.div`
  width: 432px;
  flex: none;
  display: flex;
  align-items: center;
  padding: 0 6px 0 17px;
  background: #f2f2f2;
  border: 2px solid #bdbdbd;
  border-right: none;
`;

const SearchText = styled.div`
  margin-left: 18px;
  padding-top: 2px;
  color: #3a3a3a;
  font-size: 22px;
  letter-spacing: -0.2px;
  white-space: nowrap;
`;

const SearchPromo = styled.div`
  margin-left: auto;
  width: 107px;
  height: 48px;
  display: flex;
  align-items: center;
  justify-content: center;
  background: #e4e4e4;
  border-radius: 10px;
`;

const TaskViewCell = styled.div`
  width: 78px;
  flex: none;
  display: flex;
  align-items: center;
  justify-content: center;
`;

const TaskCell = styled.div`
  position: relative;
  width: 57.200px;
  flex: none;
  display: flex;
  align-items: center;
  justify-content: center;
  ${(p) => p.$active && "background: rgba(255, 255, 255, 0.14); border-right: 4px solid #33495a;"}

  &::after {
    content: "";
    display: ${(p) => (p.$running ? "block" : "none")};
    position: absolute;
    left: ${(p) => (p.$active ? 0 : 6)}px;
    right: ${(p) => (p.$active ? "-4px" : "6px")};
    bottom: 0;
    height: 3px;
    background: #76b9ed;
  }
`;

const DiscordWrap = styled.div`
  position: relative;
  width: 37px;
  height: 37px;
  display: flex;
  align-items: center;
  justify-content: center;
  padding-right: 4px;
  border-radius: 50%;
  background: #5865f2;
`;

const DiscordBadge = styled.div`
  position: absolute;
  right: -6px;
  bottom: -4px;
  width: 24px;
  height: 24px;
  display: flex;
  align-items: center;
  justify-content: center;
  border-radius: 50%;
  background: #e5514f;
  color: #fff;
  font-size: 14px;
`;

const Tray = styled.div`
  margin-left: 38px;
  flex: 1;
  display: flex;
  align-items: center;
  color: #f0f0f0;
`;

const Temp = styled.div`
  margin-left: 12px;
  font-size: 19px;
  width: 47px;
`;

const TraySlot = styled.div`
  margin-left: ${(p) => p.$ml}px;
  display: flex;
`;

const LangBlock = styled.div`
  width: 62px;
  margin-left: 2px;
  display: flex;
  flex-direction: column;
  align-items: center;
  gap: 3px;
  font-size: 17px;
  line-height: 25px;
`;

const ClockBlock = styled(LangBlock)`
  width: 104px;
  margin-left: 0;
`;

const NotifWrap = styled.div`
  position: relative;
  margin-left: 24px;
  width: 37px;
  height: 38px;
  margin-top: -2px;
`;

const NotifBadge = styled.div`
  position: absolute;
  right: 0;
  bottom: 0;
  width: 28px;
  height: 25px;
  display: flex;
  align-items: center;
  justify-content: center;
  border-radius: 50%;
  background: #454a52;
  border: 1px solid #222;
  color: #fff;
  font-size: 17px;
  font-weight: 600;
`;

const ShowDesktop = styled.div`
  height: 60px;
  margin-left: 18px;
  width: 2px;
  background: #42597a;
`;
